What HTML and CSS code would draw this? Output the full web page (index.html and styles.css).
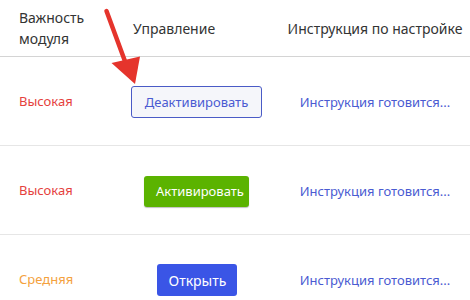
FILE: index.html
```html
<!DOCTYPE html>
<html lang="ru">
<head>
    <meta charset="UTF-8">
    <title>Модули</title>
    <link rel="stylesheet" href="styles.css">
</head>
<body>
<div class="wrap">
    <table class="modules">
        <colgroup>
            <col class="col-level">
            <col class="col-action">
            <col class="col-guide">
        </colgroup>
        <thead>
            <tr>
                <th>Важность<br>модуля</th>
                <th class="th-action">Управление</th>
                <th class="th-guide">Инструкция по настройке</th>
            </tr>
        </thead>
        <tbody>
            <tr>
                <td class="level high">Высокая</td>
                <td class="action"><button class="btn btn-outline">Деактивировать</button></td>
                <td class="guide"><a href="#">Инструкция готовится...</a></td>
            </tr>
            <tr>
                <td class="level high">Высокая</td>
                <td class="action"><button class="btn btn-green">Активировать</button></td>
                <td class="guide"><a href="#">Инструкция готовится...</a></td>
            </tr>
            <tr>
                <td class="level medium">Средняя</td>
                <td class="action"><button class="btn btn-blue">Открыть</button></td>
                <td class="guide"><a href="#">Инструкция готовится...</a></td>
            </tr>
        </tbody>
    </table>
    <svg class="arrow" width="60" height="90" viewBox="95 0 60 90">
        <line x1="106.5" y1="11" x2="126" y2="64" stroke="#e5342c" stroke-width="4.5" stroke-linecap="round"/>
        <polygon points="111.5,63 140,56.5 135,84" fill="#e5342c"/>
    </svg>
</div>
</body>
</html>
```

FILE: styles.css
```css
body {
    margin: 0;
    font-family: "Noto Sans", "Open Sans", sans-serif;
    font-size: 14px;
    color: #333;
    background: #fff;
    overflow: hidden;
}
.wrap {
    position: relative;
    width: 470px;
    height: 300px;
    overflow: hidden;
}
.modules {
    table-layout: fixed;
    border-collapse: collapse;
    width: 474px;
}
.col-level {
    width: 117px;
}
.col-action {
    width: 159px;
}
.col-guide {
    width: 198px;
}
.modules th {
    height: 56px;
    padding: 0 0 0 19px;
    font-weight: normal;
    text-align: left;
    line-height: 21px;
    color: #333;
    border-bottom: 1px solid #d4d4d4;
}
.modules th.th-action {
    padding-left: 16px;
}
.modules th.th-guide {
    padding-left: 0;
    text-align: center;
}
.modules td {
    height: 88px;
    padding: 0;
    border-bottom: 1px solid #e6e6e6;
    vertical-align: middle;
}
.level {
    padding-left: 19px !important;
    font-size: 13px;
}
.high {
    color: #e5413d;
}
.medium {
    color: #f4a13d;
}
.action {
    text-align: center;
}
.guide {
    text-align: center;
}
.guide a {
    color: #4a5bd2;
    font-size: 13px;
    text-decoration: none;
}
.btn {
    font-family: inherit;
    font-size: 13px;
    height: 32px;
    padding: 0 12px;
    border-radius: 3px;
    cursor: pointer;
    margin-top: 2px;
}
.btn-outline {
    width: 131px;
    background: #f5f6fa;
    color: #4a5bd2;
    border: 1px solid #4a5bc6;
}
.btn-green {
    width: 105px;
    height: 31px;
    background: #5bb300;
    color: #fff;
    border: none;
    box-shadow: 0 1px 1px rgba(0, 0, 0, 0.25);
}
.btn-blue {
    width: 80px;
    background: #3a55e6;
    color: #fff;
    border: none;
    font-size: 14px;
}
.arrow {
    position: absolute;
    left: 95px;
    top: 0;
}
```
